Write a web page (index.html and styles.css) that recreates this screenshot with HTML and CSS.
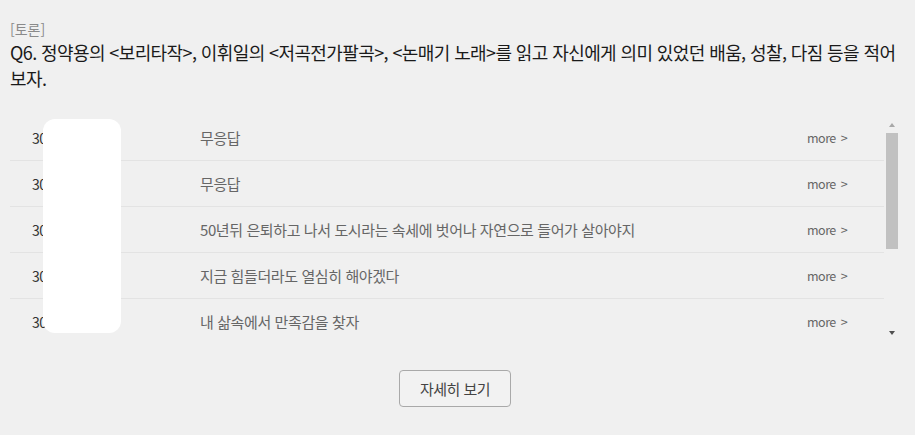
FILE: index.html
```html
<!DOCTYPE html>
<html lang="ko">

<head>
    <meta charset="UTF-8">
    <meta name="viewport" content="width=device-width, initial-scale=1.0">
    <title>토론</title>
    <link rel="stylesheet" href="styles.css">
</head>

<body>
    <div class="board">
        <div class="category">[토론]</div>
        <div class="question">Q6. 정약용의 &lt;보리타작&gt;, 이휘일의 &lt;저곡전가팔곡&gt;, &lt;논매기 노래&gt;를 읽고 자신에게 의미 있었던 배움, 성찰, 다짐 등을 적어 보자.</div>

        <div class="answer-box">
            <div class="answer-list">
                <div class="answer-row">
                    <span class="num">30</span>
                    <span class="text">무응답</span>
                    <span class="more">more <i>&gt;</i></span>
                </div>
                <div class="answer-row">
                    <span class="num">30</span>
                    <span class="text">무응답</span>
                    <span class="more">more <i>&gt;</i></span>
                </div>
                <div class="answer-row">
                    <span class="num">30</span>
                    <span class="text">50년뒤 은퇴하고 나서 도시라는 속세에 벗어나 자연으로 들어가 살아야지</span>
                    <span class="more">more <i>&gt;</i></span>
                </div>
                <div class="answer-row">
                    <span class="num">30</span>
                    <span class="text">지금 힘들더라도 열심히 해야겠다</span>
                    <span class="more">more <i>&gt;</i></span>
                </div>
                <div class="answer-row last">
                    <span class="num">30</span>
                    <span class="text">내 삶속에서 만족감을 찾자</span>
                    <span class="more">more <i>&gt;</i></span>
                </div>
            </div>
            <div class="scrollbar">
                <span class="arrow up"></span>
                <div class="track"><div class="thumb"></div></div>
                <span class="arrow down"></span>
            </div>
            <div class="redact"></div>
        </div>

        <div class="actions">
            <button class="detail-btn">자세히 보기</button>
        </div>
    </div>
</body>

</html>
```

FILE: styles.css
```css
body {
    margin: 0;
    background: #f0f0f0;
    font-family: "Noto Sans CJK KR", "Noto Sans", sans-serif;
    color: #222;
}

.board {
    padding: 20px 10px 0 10px;
}

.category {
    font-size: 14px;
    line-height: 18px;
    color: #8a8a8a;
}

.question {
    font-size: 18px;
    line-height: 26px;
    letter-spacing: -0.6px;
    color: #1a1a1a;
    margin-top: 1px;
}

.answer-box {
    position: relative;
    display: flex;
    margin-top: 24px;
    width: 888px;
}

.answer-list {
    flex-grow: 1;
}

.answer-row {
    display: flex;
    align-items: center;
    height: 45px;
    border-bottom: 1px solid #e3e3e3;
    font-size: 14px;
    letter-spacing: -0.5px;
}

.answer-row.last {
    border-bottom: none;
}

.num {
    width: 168px;
    padding-left: 22px;
    color: #333;
}

.text {
    flex-grow: 1;
    color: #666;
    font-size: 15px;
    letter-spacing: -0.4px;
}

.more {
    width: 77px;
    color: #666;
    font-size: 12.5px;
}

.more i {
    font-style: normal;
    margin-left: 2px;
}

.scrollbar {
    width: 13px;
    margin-left: 1px;
    display: flex;
    flex-direction: column;
    align-items: center;
    padding-top: 8px;
}

.arrow {
    width: 0;
    height: 0;
    border-left: 3px solid transparent;
    border-right: 3px solid transparent;
}

.arrow.up {
    border-bottom: 4px solid #a8a8a8;
}

.arrow.down {
    border-top: 4px solid #505050;
    margin-top: 82px;
}

.track {
    width: 12px;
    margin-top: 6px;
}

.thumb {
    height: 116px;
    background: #c1c1c1;
}

.redact {
    position: absolute;
    left: 33px;
    top: 4px;
    width: 78px;
    height: 214px;
    background: #fff;
    border-radius: 12px;
}

.actions {
    display: flex;
    justify-content: center;
    margin-top: 26px;
    padding-right: 5px;
}

.detail-btn {
    width: 112px;
    height: 37px;
    background: #f2f2f2;
    border: 1px solid #a9a9a9;
    border-radius: 4px;
    font-family: "Noto Sans CJK KR", sans-serif;
    font-size: 15px;
    letter-spacing: -0.5px;
    color: #444;
}
```
